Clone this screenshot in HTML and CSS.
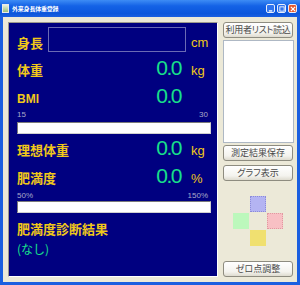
FILE: index.html
```html
<!DOCTYPE html>
<html lang="ja">
<head>
  <meta charset="UTF-8">
  <title>外来身長体重登録</title>
  <link rel="stylesheet" href="styles.css">
</head>
<body>
  <div class="window">
    <div class="titlebar">
      <span class="app-icon"></span>
      <span class="title">外来身長体重登録</span>
      <div class="caption-buttons">
        <span class="cap-btn"><svg width="7" height="7" viewBox="0 0 7 7"><rect x="1" y="5" width="4" height="1.5" fill="#fff"/></svg></span>
        <span class="cap-btn"><svg width="7" height="7" viewBox="0 0 7 7"><rect x="1" y="1" width="5" height="5" fill="none" stroke="#fff" stroke-width="1"/></svg></span>
        <span class="cap-btn close"><svg width="7" height="7" viewBox="0 0 7 7"><path d="M1 1L6 6M6 1L1 6" stroke="#fff" stroke-width="1.4"/></svg></span>
      </div>
    </div>

    <div class="client">
      <div class="panel">
        <div class="row first">
          <span class="label">身長</span>
          <input class="height-input" type="text">
          <span class="unit">cm</span>
        </div>
        <div class="row">
          <span class="label">体重</span>
          <span class="value">0.0</span>
          <span class="unit">kg</span>
        </div>
        <div class="row">
          <span class="label latin">BMI</span>
          <span class="value">0.0</span>
          <span class="unit"></span>
        </div>
        <div class="scale"><span>15</span><span>30</span></div>
        <div class="bar"></div>
        <div class="row">
          <span class="label">理想体重</span>
          <span class="value">0.0</span>
          <span class="unit">kg</span>
        </div>
        <div class="row">
          <span class="label">肥満度</span>
          <span class="value">0.0</span>
          <span class="unit">%</span>
        </div>
        <div class="scale second"><span>50%</span><span>150%</span></div>
        <div class="bar"></div>
        <div class="diag-title">肥満度診断結果</div>
        <div class="diag-result">(なし)</div>
      </div>

      <div class="side">
        <button class="btn load">利用者リスト読込</button>
        <div class="listbox"></div>
        <button class="btn save">測定結果保存</button>
        <button class="btn graph">グラフ表示</button>
        <div class="pad">
          <span></span><span class="sq blue"></span><span></span>
          <span class="sq green"></span><span></span><span class="sq pink"></span>
          <span></span><span class="sq yellow"></span><span></span>
        </div>
        <button class="btn zero">ゼロ点調整</button>
      </div>
    </div>
  </div>
</body>
</html>
```

FILE: styles.css
```css
body {
  margin: 0;
  font-family: "Noto Sans CJK JP", sans-serif;
}
.window {
  width: 300px;
  height: 285px;
  background: #1b5fe0;
  display: flex;
  flex-direction: column;
}
.titlebar {
  height: 17px;
  display: flex;
  align-items: center;
  background: linear-gradient(#3d8cf5, #1462e6 35%, #0b56dc 80%, #1b5fe0);
  padding: 0 3px 0 2px;
}
.app-icon {
  width: 7px;
  height: 9px;
  background: linear-gradient(#e8f0e0, #9ac07a);
  border: 1px solid #eaeaea;
  box-sizing: border-box;
}
.title {
  margin-left: 3px;
  color: #fff;
  font-size: 6px;
  font-weight: bold;
  letter-spacing: -0.2px;
}
.caption-buttons {
  margin-left: auto;
  display: flex;
  gap: 2px;
}
.cap-btn {
  width: 9px;
  height: 9px;
  border: 1px solid #e8eefc;
  border-radius: 2px;
  background: #2f74ee;
  box-sizing: border-box;
  display: flex;
  align-items: center;
  justify-content: center;
}
.cap-btn svg {
  width: 6px;
  height: 6px;
}
.cap-btn.close {
  background: #e45a2e;
}
.client {
  flex: 1;
  margin: 0 3px 3px;
  background: #ece9d8;
  display: flex;
  gap: 5px;
  padding: 5px 0 5px 5px;
}
.panel {
  width: 210px;
  box-sizing: border-box;
  background: #000080;
  border: 1px solid;
  border-color: #9c9a8c #fff #fff #9c9a8c;
  padding: 4px 6px 0 8px;
  display: flex;
  flex-direction: column;
}
.row {
  display: flex;
  align-items: baseline;
  height: 28px;
}
.row.first {
  align-items: flex-end;
  height: 25px;
  margin-bottom: 2px;
}
.label {
  color: #f0c81a;
  font-size: 13px;
  font-weight: bold;
}
.row.first .label,
.row.first .unit {
  line-height: 13px;
  margin-bottom: 3px;
}
.label.latin {
  font-family: "Liberation Sans", sans-serif;
  font-size: 12px;
}
.height-input {
  margin-left: auto;
  width: 138px;
  height: 25px;
  box-sizing: border-box;
  background: #000080;
  border: 1px solid #6a6ab4;
  outline: none;
}
.value {
  margin-left: auto;
  font-family: "Liberation Sans", sans-serif;
  font-size: 21px;
  line-height: 28px;
  letter-spacing: -1.5px;
  color: #18e08a;
}
.unit {
  width: 20px;
  margin-left: 10px;
  font-family: "Liberation Sans", sans-serif;
  font-size: 13px;
  color: #f0c81a;
}
.height-input + .unit {
  margin-left: 5px;
}
.scale {
  display: flex;
  justify-content: space-between;
  height: 10px;
  line-height: 10px;
  padding-right: 3px;
  font-family: "Liberation Sans", sans-serif;
  font-size: 8px;
  color: #a8a8c8;
}
.scale.second {
  margin-top: 1px;
}
.bar {
  height: 12px;
  margin-top: 2px;
  box-sizing: border-box;
  background: #fff;
  border: 1px solid;
  border-color: #7a7a7a #d0d0d0 #d0d0d0 #7a7a7a;
}
.scale.second + .bar {
  margin-top: 0;
}
.diag-title {
  margin-top: 8px;
  line-height: 16px;
  color: #f0c81a;
  font-size: 13px;
  font-weight: bold;
}
.diag-result {
  margin-top: 4px;
  line-height: 16px;
  color: #18e08a;
  font-size: 12px;
}
.side {
  width: 71px;
  display: flex;
  flex-direction: column;
}
.btn {
  height: 16px;
  width: 70px;
  padding: 0;
  border: 1px solid #8e8c80;
  border-radius: 3px;
  background: linear-gradient(#ffffff, #f4f3ee 70%, #dedbcf);
  font-family: "Noto Sans CJK JP", sans-serif;
  font-size: 9px;
  line-height: 14px;
  color: #4a4a4a;
  font-feature-settings: "palt";
  white-space: nowrap;
  overflow: hidden;
}
.btn.load {
  letter-spacing: -0.3px;
}
.listbox {
  height: 103px;
  margin-top: 2px;
  box-sizing: border-box;
  background: #fff;
  border: 1px solid #aeb8c4;
}
.btn.save {
  margin-top: 2px;
}
.btn.graph {
  margin-top: 4px;
}
.pad {
  margin: 15px 0 0 10px;
  display: grid;
  grid-template-columns: repeat(3, 16px);
  grid-template-rows: repeat(3, 16px);
  gap: 1px;
}
.sq.blue {
  background: #b4b4f2;
  outline: 1px dotted #8c8cd8;
  outline-offset: -1px;
}
.sq.green {
  background: #bcf8bc;
}
.sq.pink {
  background: #f8c0c4;
  outline: 1px dotted #e09aa0;
  outline-offset: -1px;
}
.sq.yellow {
  background: #f0e070;
}
.btn.zero {
  margin-top: auto;
}
```
